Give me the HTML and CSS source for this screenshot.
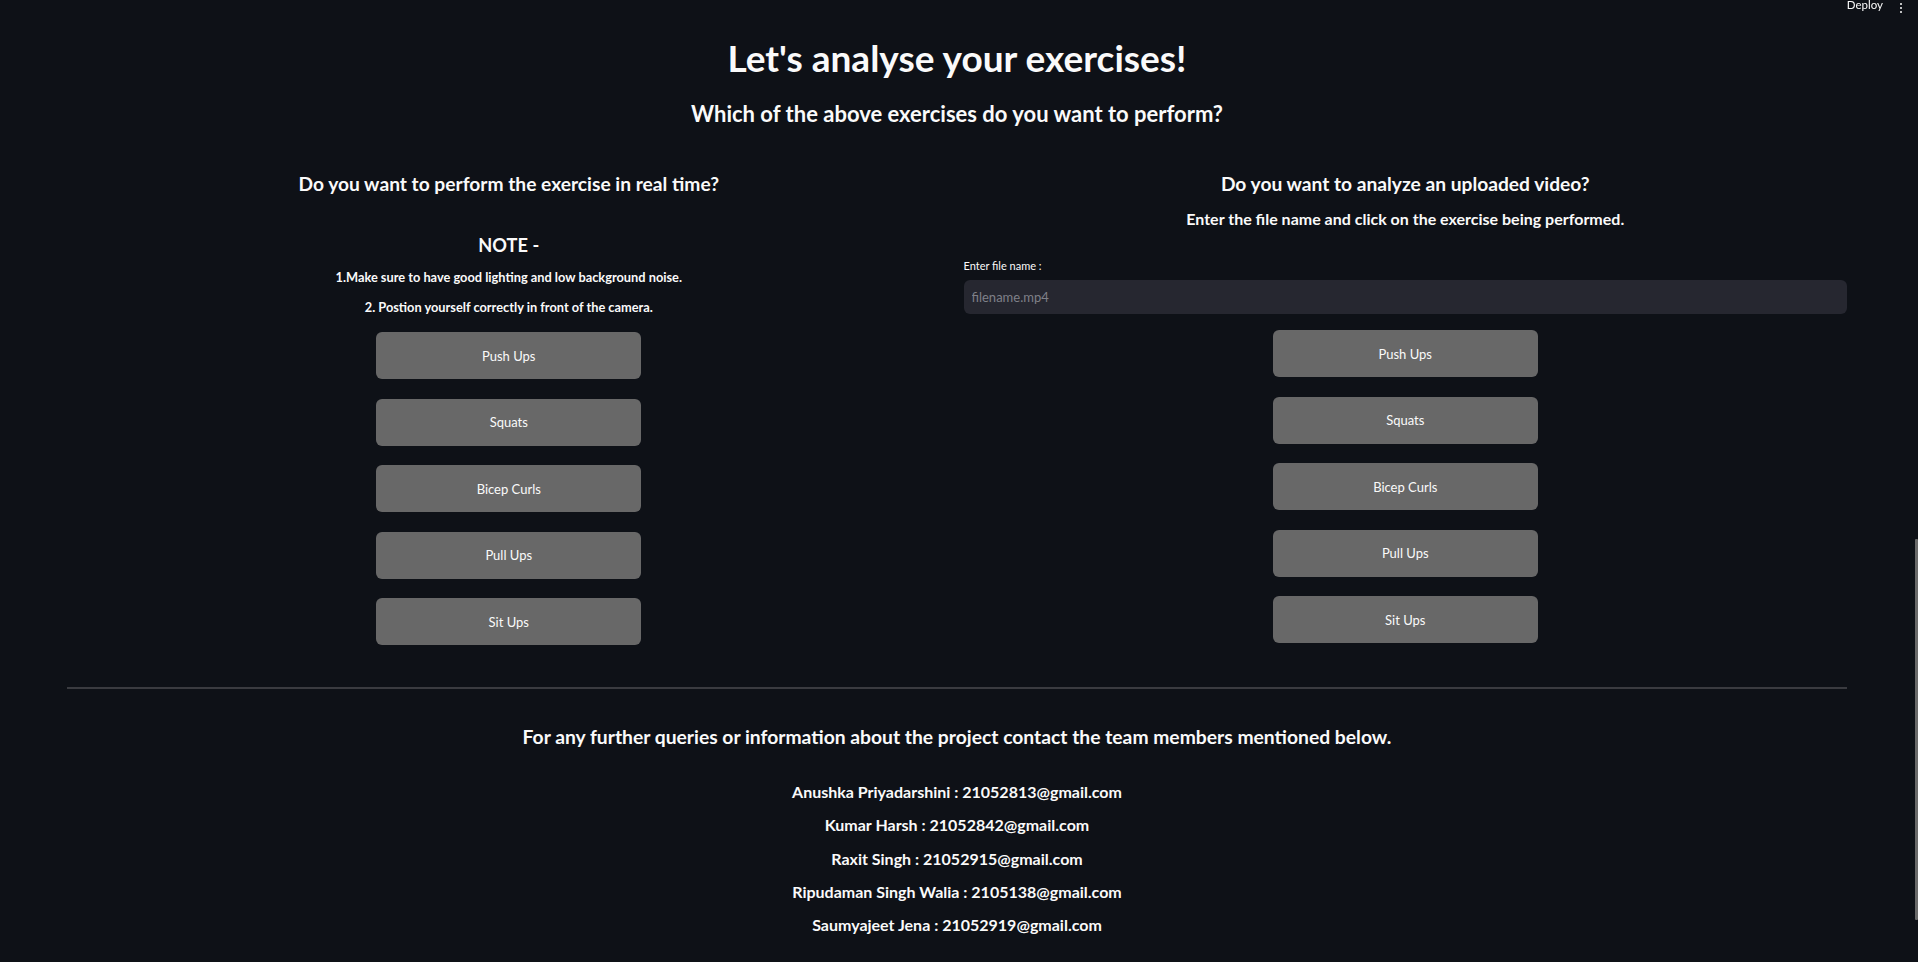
FILE: index.html
```html
<!DOCTYPE html>
<html lang="en">
<head>
<meta charset="utf-8">
<title>Exercise Analysis</title>
<link rel="stylesheet" href="styles.css">
</head>
<body>
<header class="topbar">
  <span class="deploy">Deploy</span>
  <span class="menu-dots"><i></i><i></i><i></i></span>
</header>
<main class="main">
  <h1 class="title">Let's analyse your exercises!</h1>
  <h3 class="subtitle">Which of the above exercises do you want to perform?</h3>
  <div class="columns">
    <section class="col">
      <h4 class="col-head">Do you want to perform the exercise in real time?</h4>
      <h4 class="note">NOTE -</h4>
      <p class="note-line first">1.Make sure to have good lighting and low background noise.</p>
      <p class="note-line second">2. Postion yourself correctly in front of the camera.</p>
      <div class="btns left-btns">
        <button class="btn">Push Ups</button>
        <button class="btn">Squats</button>
        <button class="btn">Bicep Curls</button>
        <button class="btn">Pull Ups</button>
        <button class="btn">Sit Ups</button>
      </div>
    </section>
    <section class="col">
      <h4 class="col-head">Do you want to analyze an uploaded video?</h4>
      <p class="sub-head">Enter the file name and click on the exercise being performed.</p>
      <label class="field-label" for="fname">Enter file name :</label>
      <input class="field" id="fname" type="text" placeholder="filename.mp4">
      <div class="btns right-btns">
        <button class="btn">Push Ups</button>
        <button class="btn">Squats</button>
        <button class="btn">Bicep Curls</button>
        <button class="btn">Pull Ups</button>
        <button class="btn">Sit Ups</button>
      </div>
    </section>
  </div>
  <hr class="divider">
  <h4 class="contact-head">For any further queries or information about the project contact the team members mentioned below.</h4>
  <div class="contacts">
    <p>Anushka Priyadarshini : 21052813@gmail.com</p>
    <p>Kumar Harsh : 21052842@gmail.com</p>
    <p>Raxit Singh : 21052915@gmail.com</p>
    <p>Ripudaman Singh Walia : 2105138@gmail.com</p>
    <p>Saumyajeet Jena : 21052919@gmail.com</p>
  </div>
</main>
<div class="scroll-thumb"></div>
</body>
</html>
```
FILE: styles.css
```css
* { box-sizing: border-box; }
html, body {
  margin: 0;
  padding: 0;
  height: 100%;
  overflow: hidden;
}
body {
  background: #0e1117;
  color: #fafafa;
  font-family: "Source Sans Pro", Lato, "Liberation Sans", sans-serif;
  font-weight: 700;
}
.topbar {
  position: fixed;
  top: -4px;
  right: 0;
  height: 18px;
  display: flex;
  align-items: center;
  gap: 17px;
  padding-right: 16px;
}
.deploy {
  font-size: 11.5px;
  font-weight: 400;
  color: #fafafa;
  line-height: 18px;
}
.menu-dots {
  display: flex;
  flex-direction: column;
  gap: 2px;
  padding-top: 6px;
}
.menu-dots i {
  display: block;
  width: 2px;
  height: 2px;
  border-radius: 50%;
  background: #fafafa;
}
.main {
  padding: 36px 71px 0 67px;
}
.title {
  margin: 0;
  text-align: center;
  font-size: 37px;
  line-height: 44px;
  font-weight: 700;
}
.subtitle {
  margin: 19px 0 0;
  text-align: center;
  font-size: 22px;
  line-height: 30px;
  font-weight: 700;
}
.columns {
  display: grid;
  grid-template-columns: 1fr 1fr;
  gap: 13px;
  margin-top: 41px;
}
.col {
  display: flex;
  flex-direction: column;
  align-items: center;
}
.col-head {
  margin: 0;
  font-size: 19.2px;
  line-height: 28px;
  text-align: center;
}
.note {
  margin: 33px 0 0;
  font-size: 18.2px;
  line-height: 28px;
}
.note-line {
  margin: 0;
  font-size: 12.8px;
  line-height: 20px;
}
.note-line.first { margin-top: 8px; }
.note-line.second { margin-top: 10px; }
.btns {
  display: flex;
  flex-direction: column;
  gap: 19.5px;
}
.left-btns { margin-top: 15px; }
.right-btns { margin-top: 16px; }
.btn {
  width: 265px;
  height: 47px;
  border: none;
  border-radius: 6px;
  background: #686868;
  color: #fafafa;
  font-family: inherit;
  font-size: 13px;
  font-weight: 400;
}
.sub-head {
  margin: 9px 0 0;
  font-size: 16px;
  line-height: 24px;
}
.field-label {
  align-self: stretch;
  margin-top: 27px;
  font-size: 11px;
  line-height: 16px;
  font-weight: 400;
}
.field {
  align-self: stretch;
  margin-top: 6px;
  height: 34px;
  border: none;
  border-radius: 6px;
  background: #262730;
  color: #fafafa;
  padding: 0 8px;
  font-family: inherit;
  font-size: 13px;
  outline: none;
}
.field::placeholder { color: #7f8088; }
.divider {
  margin: 42px 0 0;
  border: none;
  height: 2px;
  background: #3a3b40;
}
.contact-head {
  margin: 34px 0 0;
  text-align: center;
  font-size: 19.3px;
  line-height: 28px;
}
.contacts {
  margin-top: 24px;
  display: flex;
  flex-direction: column;
  align-items: center;
}
.contacts p {
  margin: 0;
  font-size: 16px;
  line-height: 33.25px;
}
.scroll-thumb {
  position: fixed;
  right: 0;
  top: 539px;
  width: 3px;
  height: 381px;
  background: #6a6a6a;
  border-radius: 1px;
}
```
